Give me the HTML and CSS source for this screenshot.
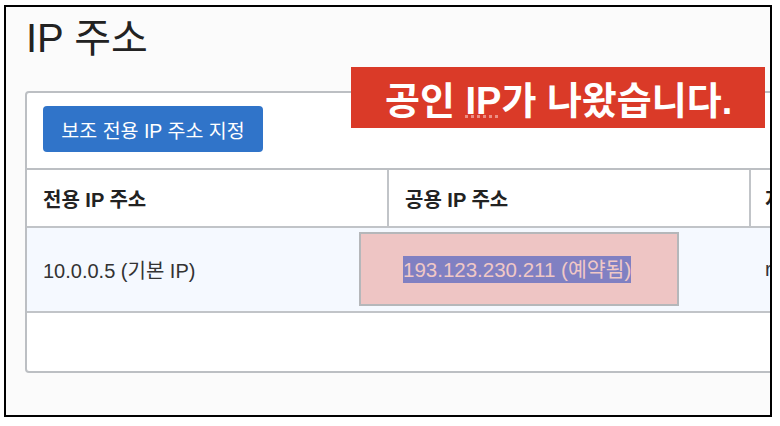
FILE: index.html
```html
<html>
<head>
    <link rel="stylesheet" href="styles.css">
<title>IP 주소</title>
</head>
<body>

<div class="frame">
    <h1 class="title">IP 주소</h1>

    <div class="panel">
        <div class="toolbar">
            <button class="btn-primary" type="button">보조 전용 IP 주소 지정</button>
        </div>
        <div class="row row-head">
            <div class="cell cell-first">전용 IP 주소</div>
            <div class="cell cell-second">공용 IP 주소</div>
            <div class="cell cell-third">저장</div>
        </div>
        <div class="row row-data">
            <div class="cell cell-first">10.0.0.5 (기본 IP)</div>
            <div class="cell cell-second"></div>
            <div class="cell cell-third">rma</div>
            <div class="mark-box"><span class="selected">193.123.230.211 (예약됨)</span></div>
        </div>
        <div class="row row-empty"></div>
    </div>

    <div class="callout"><span>공인 <span class="spell">IP</span>가 나왔습니다.</span></div>
</div>

</body>
</html>
```

FILE: styles.css
```css
body {
  margin: 0;
  background: #fff;
  font-family: "Liberation Sans", "Noto Sans CJK KR", sans-serif;
  color: #333;
}

.frame {
  position: relative;
  margin: 5px 0 0 4px;
  width: 764px;
  height: 408px;
  border: 2px solid #000;
  background: #fbfbfb;
  overflow: hidden;
}

.title {
  margin: 8px 0 0 20px;
  font-size: 40px;
  line-height: 46px;
  font-weight: normal;
  color: #222;
}

.panel {
  margin: 30px 0 0 19px;
  width: 1000px;
  border: 2px solid #bcbfc3;
  border-radius: 4px;
  background: #fff;
}

.toolbar {
  padding: 13px 16px 16px;
  border-bottom: 2px solid #bcbfc3;
}

.btn-primary {
  display: block;
  width: 220px;
  height: 46px;
  padding: 0;
  border: none;
  border-radius: 4px;
  background: #3074c9;
  color: #fff;
  font-family: inherit;
  font-size: 19.5px;
}

.row {
  display: flex;
  border-bottom: 2px solid #c1c4c8;
}

.row-head { height: 56px; }
.row-data { position: relative; height: 83px; background: #f5f9ff; }
.row-empty { height: 58px; border-bottom: none; }

.cell {
  display: flex;
  align-items: center;
  padding-left: 16px;
  font-size: 20px;
  box-sizing: border-box;
}

.cell-first { width: 362px; }
.cell-second { width: 362px; }
.cell-third { flex: 1; padding-left: 14px; }

.row-head .cell {
  font-weight: bold;
  color: #222;
}
.row-head .cell-first,
.row-head .cell-second { border-right: 2px solid #c1c4c8; }

.mark-box {
  position: absolute;
  left: 332px;
  top: 4px;
  width: 320px;
  height: 74px;
  box-sizing: border-box;
  border: 2px solid #b5b7ba;
  background: #eec5c4;
  display: flex;
  align-items: center;
  padding-left: 42px;
}

.selected {
  display: inline-block;
  height: 27px;
  line-height: 27px;
  background: #8080c2;
  color: #f0c8c6;
  font-size: 20.5px;
}

.callout {
  position: absolute;
  left: 345px;
  top: 60px;
  width: 414px;
  height: 61px;
  box-sizing: border-box;
  padding-left: 34px;
  display: flex;
  align-items: center;
  background: #da3a28;
  color: #fff;
  font-size: 38px;
  font-weight: bold;
  white-space: nowrap;
}

.spell {
  text-decoration: underline dotted #ec8f84;
  text-decoration-thickness: 3px;
  text-underline-offset: 1px;
}
```
